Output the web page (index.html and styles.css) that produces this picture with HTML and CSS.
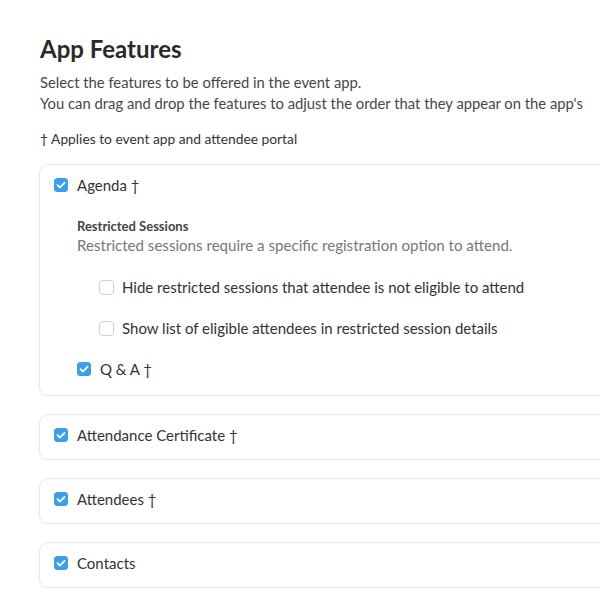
FILE: index.html
```html
<!DOCTYPE html>
<html>
<head>
<meta charset="utf-8">
<link rel="stylesheet" href="styles.css">
</head>
<body>
<div class="page">
  <div class="content">
    <h1 class="title">App Features</h1>
    <p class="desc">Select the features to be offered in the event app.<br><span class="nowrap">You can drag and drop the features to adjust the order that they appear on the app's</span></p>
    <p class="note">† Applies to event app and attendee portal</p>

    <div class="card">
      <label class="row">
        <span class="cb checked"><svg viewBox="0 0 14 14" width="14" height="14"><path d="M3.5 7.2 L6 9.5 L10.5 4.8" fill="none" stroke="#fff" stroke-width="1.8" stroke-linecap="round" stroke-linejoin="round"/></svg></span>
        <span class="lbl">Agenda †</span>
      </label>
      <div class="sub">
        <div class="sub-title">Restricted Sessions</div>
        <div class="sub-desc">Restricted sessions require a specific registration option to attend.</div>
        <div class="options">
          <label class="row">
            <span class="cb empty"></span>
            <span class="lbl">Hide restricted sessions that attendee is not eligible to attend</span>
          </label>
          <label class="row">
            <span class="cb empty"></span>
            <span class="lbl">Show list of eligible attendees in restricted session details</span>
          </label>
        </div>
        <label class="row qa">
          <span class="cb checked"><svg viewBox="0 0 14 14" width="14" height="14"><path d="M3.5 7.2 L6 9.5 L10.5 4.8" fill="none" stroke="#fff" stroke-width="1.8" stroke-linecap="round" stroke-linejoin="round"/></svg></span>
          <span class="lbl">Q &amp; A †</span>
        </label>
      </div>
    </div>

    <div class="card">
      <label class="row">
        <span class="cb checked"><svg viewBox="0 0 14 14" width="14" height="14"><path d="M3.5 7.2 L6 9.5 L10.5 4.8" fill="none" stroke="#fff" stroke-width="1.8" stroke-linecap="round" stroke-linejoin="round"/></svg></span>
        <span class="lbl">Attendance Certificate †</span>
      </label>
    </div>

    <div class="card">
      <label class="row">
        <span class="cb checked"><svg viewBox="0 0 14 14" width="14" height="14"><path d="M3.5 7.2 L6 9.5 L10.5 4.8" fill="none" stroke="#fff" stroke-width="1.8" stroke-linecap="round" stroke-linejoin="round"/></svg></span>
        <span class="lbl">Attendees †</span>
      </label>
    </div>

    <div class="card">
      <label class="row">
        <span class="cb checked"><svg viewBox="0 0 14 14" width="14" height="14"><path d="M3.5 7.2 L6 9.5 L10.5 4.8" fill="none" stroke="#fff" stroke-width="1.8" stroke-linecap="round" stroke-linejoin="round"/></svg></span>
        <span class="lbl">Contacts</span>
      </label>
    </div>
  </div>
</div>
</body>
</html>
```
FILE: styles.css
```css
html, body {
  margin: 0;
  padding: 0;
  background: #ffffff;
}
body {
  font-family: Lato, "Open Sans", sans-serif;
  color: #333333;
  overflow: hidden;
}
.page {
  width: 600px;
  height: 600px;
  overflow: hidden;
}
.content {
  width: 760px;
  padding: 34px 0 0 40px;
  box-sizing: border-box;
}
.title {
  margin: 0;
  font-size: 24px;
  line-height: 30px;
  font-weight: 700;
  color: #2a2a2a;
}
.desc {
  margin: 8px 0 0 0;
  font-size: 14.8px;
  line-height: 21px;
  color: #474747;
}
.nowrap {
  white-space: nowrap;
}
.note {
  margin: 16px 0 0 0;
  font-size: 13.8px;
  line-height: 18px;
  color: #333333;
}
.card {
  margin: 16px 0 0 -1px;
  border: 1px solid #e9e9e9;
  border-radius: 10px;
  box-shadow: 0 1px 4px rgba(0, 0, 0, 0.04);
  padding: 9px 14px 13px 14px;
  background: #fff;
}
.card + .card {
  margin-top: 18px;
}
.row {
  display: flex;
  align-items: center;
  gap: 9px;
  height: 22px;
}
.cb {
  width: 14px;
  height: 14px;
  border-radius: 3px;
  border: 1px solid #cfcfcf;
  box-sizing: border-box;
  background: #fff;
  flex: none;
  display: flex;
}
.cb.empty {
  width: 15px;
  height: 15px;
  border-radius: 4px;
  margin-right: -1px;
}
.cb.checked {
  background: #3f9ee8;
  border-color: #3f9ee8;
}
.cb svg {
  margin: -1px;
}
.lbl {
  font-size: 15px;
  color: #333333;
  white-space: nowrap;
}
.sub {
  padding: 22px 0 2px 23px;
}
.sub-title {
  font-size: 13px;
  line-height: 17px;
  font-weight: 700;
  color: #444;
}
.sub-desc {
  font-size: 15.1px;
  line-height: 21px;
  color: #777777;
  white-space: nowrap;
}
.options {
  display: flex;
  flex-direction: column;
  gap: 19px;
  padding: 20px 0 0 22px;
}
.qa {
  margin-top: 19px;
}
```
